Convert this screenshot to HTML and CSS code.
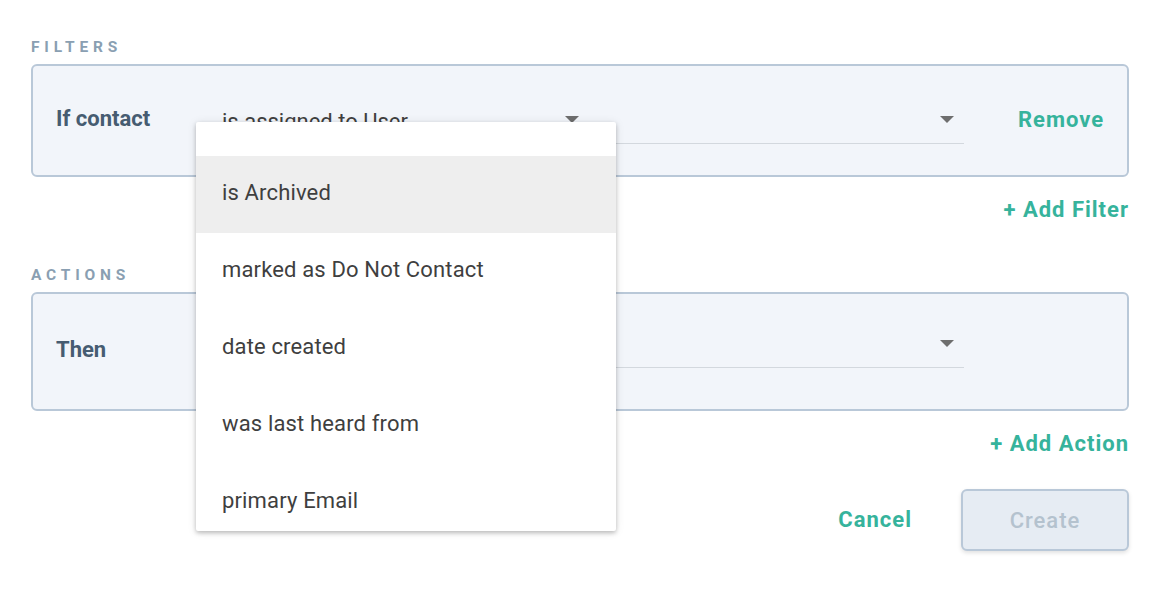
FILE: index.html
```html
<!DOCTYPE html>
<html lang="en">
<head>
<meta charset="utf-8">
<title>Rule editor</title>
<link rel="stylesheet" href="styles.css">
</head>
<body>
<div class="page">
  <div class="section-label">Filters</div>
  <div class="card card-filter">
    <div class="card-label">If contact</div>
    <div class="selects">
      <div class="select"><span class="select-value">is assigned to User</span><span class="caret"></span></div>
      <div class="select"><span class="select-value"></span><span class="caret"></span></div>
    </div>
    <button class="link-btn remove">Remove</button>
  </div>
  <div class="add-row"><button class="link-btn">+ Add Filter</button></div>

  <div class="section-label section-actions">Actions</div>
  <div class="card card-action">
    <div class="card-label">Then</div>
    <div class="selects">
      <div class="select"><span class="select-value"></span><span class="caret"></span></div>
    </div>
    <div class="remove-spacer"></div>
  </div>
  <div class="add-row"><button class="link-btn">+ Add Action</button></div>

  <div class="footer">
    <button class="link-btn">Cancel</button>
    <button class="create-btn" disabled>Create</button>
  </div>

  <ul class="menu">
    <li class="menu-item active">is Archived</li>
    <li class="menu-item">marked as Do Not Contact</li>
    <li class="menu-item">date created</li>
    <li class="menu-item">was last heard from</li>
    <li class="menu-item">primary Email</li>
  </ul>
</div>
</body>
</html>
```

FILE: styles.css
```css
* { box-sizing: border-box; }

html, body {
  margin: 0;
  padding: 0;
  background: #ffffff;
  font-family: Roboto, "Liberation Sans", Arial, sans-serif;
}

.page {
  position: relative;
  width: 1164px;
  height: 592px;
  padding: 38px 35px 0 31px;
}

.section-label {
  font-size: 15.5px;
  line-height: 18px;
  font-weight: 700;
  letter-spacing: 4.8px;
  text-transform: uppercase;
  color: #8a9fb2;
}

.section-actions { margin-top: 43px; }

.card {
  display: flex;
  align-items: flex-start;
  margin-top: 8px;
  padding: 0 23px;
  background: #f2f5fa;
  border: 2px solid #b9c8d8;
  border-radius: 6px;
}

.card-filter { height: 113px; }
.card-action { height: 119px; }

.card-label {
  width: 166px;
  flex: none;
  font-size: 22px;
  line-height: 26px;
  font-weight: 700;
  color: #465c71;
}

.card-filter .card-label { margin-top: 40px; }
.card-action .card-label { margin-top: 43px; }

.selects {
  flex: 1;
  display: flex;
  gap: 8px;
}

.card-filter .selects { margin-top: 30px; }
.card-action .selects { margin-top: 26px; }

.select {
  flex: 1;
  height: 48px;
  display: flex;
  justify-content: space-between;
  align-items: flex-start;
  padding-top: 13px;
  border-bottom: 1px solid #d3d8de;
}

.select-value {
  font-size: 22px;
  line-height: 26px;
  color: #3f3f3f;
  white-space: nowrap;
}

.caret {
  width: 0;
  height: 0;
  margin-top: 7px;
  margin-right: 10px;
  border-left: 7px solid transparent;
  border-right: 7px solid transparent;
  border-top: 7px solid #6e6e6e;
}

.link-btn {
  background: none;
  border: 0;
  padding: 0;
  margin: 0;
  font-family: inherit;
  font-size: 22px;
  line-height: 26px;
  font-weight: 700;
  letter-spacing: 1px;
  color: #36b39c;
  cursor: pointer;
}

.remove {
  margin-left: 54px;
  margin-top: 41px;
  width: 86px;
  text-align: left;
  white-space: nowrap;
}

.remove-spacer {
  margin-left: 54px;
  width: 86px;
}

.add-row {
  display: flex;
  justify-content: flex-end;
  margin-top: 20px;
}

.footer {
  display: flex;
  justify-content: flex-end;
  align-items: center;
  gap: 49px;
  margin-top: 32px;
}

.create-btn {
  width: 168px;
  height: 62px;
  background: #e6ecf3;
  border: 2px solid #b9c8d8;
  border-radius: 6px;
  box-shadow: 0 2px 4px rgba(0, 0, 0, 0.12);
  font-family: inherit;
  font-size: 22px;
  font-weight: 500;
  letter-spacing: 1px;
  color: #b4c2ce;
}

.menu {
  position: absolute;
  left: 196px;
  top: 122px;
  width: 420px;
  height: 409px;
  margin: 0;
  padding: 34px 0 0;
  list-style: none;
  overflow: hidden;
  background: #ffffff;
  border-radius: 2px;
  box-shadow: 0 2px 4px rgba(0, 0, 0, 0.22), 0 1px 10px rgba(0, 0, 0, 0.10);
}

.menu-item {
  height: 77px;
  padding: 24px 26px 0;
  font-size: 22px;
  line-height: 26px;
  letter-spacing: 0.15px;
  color: #3f3f3f;
  white-space: nowrap;
}

.menu-item.active { background: #eeeeee; }
```
